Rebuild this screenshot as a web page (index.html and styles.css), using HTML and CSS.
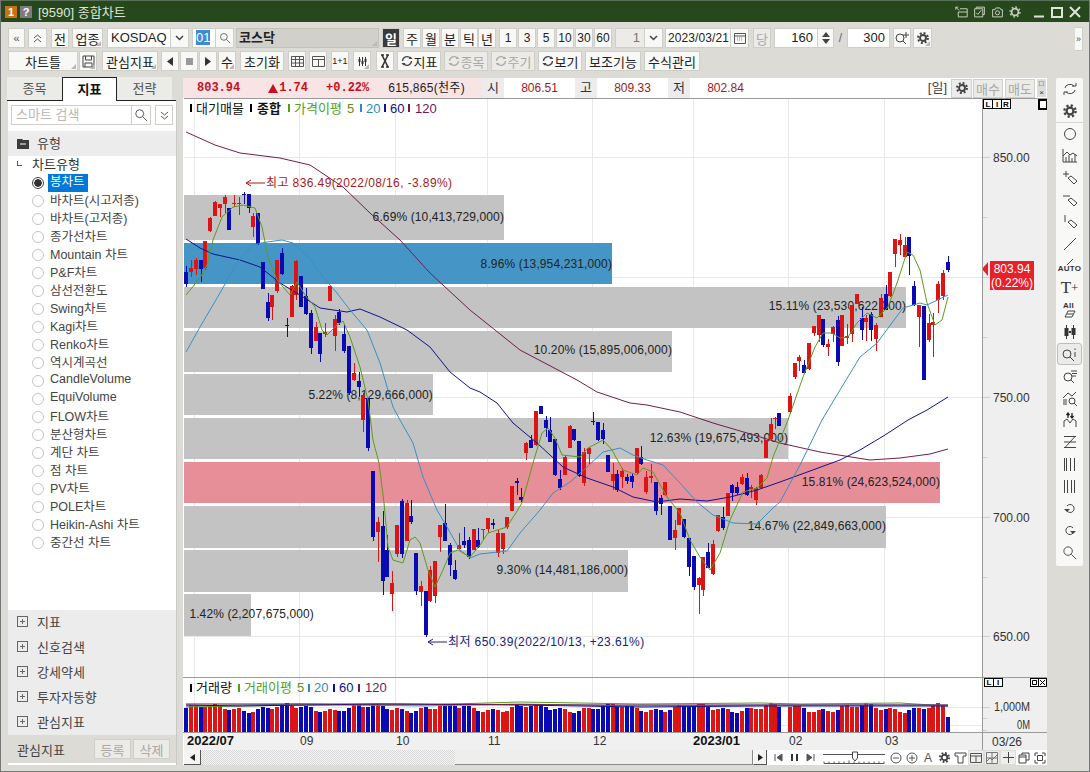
FILE: index.html
```html
<!DOCTYPE html>
<html lang="ko">
<head>
    <meta charset="utf-8">
    <title>[9590] 종합차트</title>
    <link rel="stylesheet" href="styles.css">
</head>
<body>
<svg class="defs" width="0" height="0">
    <symbol id="gear" viewBox="0 0 16 16">
        <circle cx="8" cy="8" r="5.6" fill="none" stroke="#444" stroke-width="2.4" stroke-dasharray="2.2 2.2"/>
        <circle cx="8" cy="8" r="3.4" fill="none" stroke="#444" stroke-width="2.2"/>
    </symbol>
    <symbol id="search" viewBox="0 0 16 16">
        <circle cx="6.5" cy="6.5" r="4.5" fill="none" stroke="#444"/>
        <path d="M10 10l5 5" stroke="#444" fill="none"/>
    </symbol>
    <symbol id="tag" viewBox="0 0 16 16">
        <path d="M6 8l3-2 6 5-3 3z" fill="none" stroke="#444"/>
    </symbol>
    <symbol id="reload" viewBox="0 0 12 12">
        <path d="M1.5 6a4.5 4.5 0 0 1 8-2.6M10.5 6a4.5 4.5 0 0 1-8 2.6" fill="none" stroke="currentColor" stroke-width="1.3"/>
        <path d="M7.5 4h4l-2-2.4zM4.5 8h-4l2 2.4z" fill="currentColor"/>
    </symbol>
</svg>

<header class="titlebar">
    <span class="badge badge-one">1</span>
    <span class="badge badge-help">?</span>
    <span class="title">[9590] 종합차트</span>
    <div class="title-icons">
        <svg width="13" height="12" viewBox="0 0 16 14"><path d="M6 3h9v10H4V7M4 7h11M1 1l4 4M1 1h3M1 1v3" fill="none" stroke="#c8d0c0" stroke-width="1.2"/></svg>
        <svg width="13" height="12" viewBox="0 0 16 14"><path d="M4 3V1h10v9h-2M2 3h10v10H2zM4 8l2 2 4-5" fill="none" stroke="#c8d0c0" stroke-width="1.2"/></svg>
        <svg width="13" height="12" viewBox="0 0 16 14"><path d="M2 4h3l1-2h5l1 2h2v9H2z" fill="none" stroke="#c8d0c0" stroke-width="1.2"/><circle cx="8" cy="8" r="2.5" fill="none" stroke="#c8d0c0" stroke-width="1.2"/></svg>
        <svg width="12" height="12" viewBox="0 0 14 14"><circle cx="7" cy="7" r="4" fill="none" stroke="#c8d0c0" stroke-width="2"/><circle cx="7" cy="7" r="5.8" fill="none" stroke="#c8d0c0" stroke-width="1.6" stroke-dasharray="2 2.5"/></svg>
    </div>
    <div class="win-buttons">
        <svg width="12" height="12" viewBox="0 0 12 12"><path d="M1 10.5h10" stroke="#dfe4da" stroke-width="2"/></svg>
        <svg width="12" height="12" viewBox="0 0 12 12"><rect x="1" y="2" width="10" height="9" fill="none" stroke="#dfe4da" stroke-width="2"/></svg>
        <svg width="12" height="12" viewBox="0 0 12 12"><path d="M1 1l10 10M11 1L1 11" stroke="#dfe4da" stroke-width="2"/></svg>
    </div>
</header>

<div class="toolbar">
    <div class="tool-row">
        <button class="btn w17 small">«</button>
        <button class="btn w19 ml3 small">
            <svg width="9" height="9" viewBox="0 0 9 9"><path d="M1 4l3.5-3L8 4M1 8l3.5-3L8 8" fill="none" stroke="#555"/></svg>
        </button>
        <button class="btn w18 ml4">전</button>
        <button class="btn w31 ml3 corner">업종</button>
        <div class="combo w82 ml4">
            <span class="field">KOSDAQ</span>
            <span class="drop"><svg width="9" height="6" viewBox="0 0 9 6"><path d="M1 1l3.5 3.5L8 1" fill="none" stroke="#444" stroke-width="1.5"/></svg></span>
        </div>
        <div class="combo w42 ml3">
            <span class="field code"><mark>01</mark></span>
            <span class="drop"><svg width="12" height="12"><use href="#search" width="12" height="12"/></svg></span>
        </div>
        <div class="name-box w143 ml2 corner">코스닥</div>
        <button class="btn w18 ml3 active">일</button>
        <button class="btn w18 ml3">주</button>
        <button class="btn w18 ml1">월</button>
        <button class="btn w18 ml1">분</button>
        <button class="btn w18 ml1">틱</button>
        <button class="btn w18">년</button>
        <button class="btn w18 ml3 num">1</button>
        <button class="btn w18 ml1 num">3</button>
        <button class="btn w18 ml1 num">5</button>
        <button class="btn w18 ml1 num">10</button>
        <button class="btn w18 ml1 num">30</button>
        <button class="btn w18 ml1 num">60</button>
        <div class="combo w48 ml3">
            <span class="field grey right">1</span>
            <span class="drop"><svg width="9" height="6" viewBox="0 0 9 6"><path d="M1 1l3.5 3.5L8 1" fill="none" stroke="#444" stroke-width="1.5"/></svg></span>
        </div>
        <div class="combo w84 ml2">
            <span class="field date">2023/03/21</span>
            <span class="drop"><svg width="12" height="11" viewBox="0 0 12 11"><path d="M.5.5h11v10H.5zM.5 3h11" fill="none" stroke="#555"/><path d="M3 5h6M3 7h6" stroke="#888" stroke-dasharray="1 1"/></svg></span>
        </div>
        <button class="btn w18 ml4 off">당</button>
        <div class="combo w60 ml3">
            <span class="field right">160</span>
            <span class="updown">
                <svg width="8" height="5" viewBox="0 0 8 5"><path d="M4 0l4 5H0z" fill="#444"/></svg>
                <svg width="8" height="5" viewBox="0 0 8 5"><path d="M4 5l4-5H0z" fill="#444"/></svg>
            </span>
        </div>
        <span class="slash">/</span>
        <div class="combo w43"><span class="field right">300</span></div>
        <button class="btn w18 ml3"><svg width="16" height="14" viewBox="0 0 16 14"><circle cx="6" cy="7" r="4" fill="none" stroke="#444"/><path d="M9 10l3 3M12 1v6M9 4h6" stroke="#444" fill="none"/></svg></button>
        <button class="btn w19 ml2 corner"><svg width="14" height="14"><use href="#gear" width="14" height="14"/></svg></button>
        <span class="more">»</span>
    </div>
    <div class="tool-row row-two">
        <button class="btn w70 corner">차트틀</button>
        <button class="btn w18 ml1 corner"><svg width="13" height="13" viewBox="0 0 13 13"><path d="M1 1h11v11H1zM3.5 1v4h6V1M3 12V8h7v4" fill="none" stroke="#444"/></svg></button>
        <button class="btn w56 ml5 corner">관심지표</button>
        <button class="btn w18 ml3"><svg width="6" height="9" viewBox="0 0 6 9"><path d="M6 0v9L0 4.5z" fill="#333"/></svg></button>
        <button class="btn w18 ml1"><svg width="7" height="7"><rect width="7" height="7" fill="#999"/></svg></button>
        <button class="btn w18 ml1"><svg width="6" height="9" viewBox="0 0 6 9"><path d="M0 0v9l6-4.5z" fill="#333"/></svg></button>
        <button class="btn w18 ml1 corner">수</button>
        <button class="btn w44 ml4">초기화</button>
        <button class="btn w18 ml4"><svg width="13" height="11" viewBox="0 0 13 11"><path d="M.5.5h12v10H.5zM.5 3.5h12M.5 7h12M4.500 .5v10M8.500 .5v10" fill="none" stroke="#555"/></svg></button>
        <button class="btn w18 ml3"><svg width="13" height="11" viewBox="0 0 13 11"><path d="M.5.5h12v10H.5zM.5 3.500h12M6.500 3.500v7" fill="none" stroke="#555"/></svg></button>
        <button class="btn w18 ml4 tiny">1+1</button>
        <button class="btn w18 ml4 corner"><svg width="11" height="11" viewBox="0 0 11 11"><path d="M2.500 1v9M5.500 1v9M8.500 1v9" stroke="#333"/><path d="M1.500 3h2v3h-2zM4.500 5h2v3h-2zM7.500 3h2v3h-2z" fill="#333"/></svg></button>
        <button class="btn w18 ml5"><svg width="10" height="14" viewBox="0 0 10 14"><path d="M2 1l6 12M8 1L2 13" stroke="#333" stroke-width="1.600"/><path d="M1 1h3M6 1h3M1 13h3M6 13h3" stroke="#333" stroke-width="1.500"/></svg></button>
        <button class="btn w44 ml3"><svg class="reload" width="12" height="12"><use href="#reload"/></svg>지표</button>
        <button class="btn w44 ml3 off"><svg class="reload" width="12" height="12"><use href="#reload"/></svg>종목</button>
        <button class="btn w44 ml3 off"><svg class="reload" width="12" height="12"><use href="#reload"/></svg>주기</button>
        <button class="btn w44 ml3"><svg class="reload" width="12" height="12"><use href="#reload"/></svg>보기</button>
        <button class="btn w56 ml3">보조기능</button>
        <button class="btn w56 ml3">수식관리</button>
    </div>
</div>

<main class="content">
    <aside class="side">
        <div class="tabs">
            <div class="tab">종목</div>
            <div class="tab tab-on">지표</div>
            <div class="tab">전략</div>
        </div>
        <div class="side-body">
            <div class="search-row">
                <span class="search-input">스마트 검색</span>
                <span class="search-btn"><svg width="14" height="14"><use href="#search" width="14" height="14"/></svg></span>
                <span class="search-more"><svg width="9" height="9" viewBox="0 0 9 9"><path d="M1 1l3.500 3L8 1M1 5l3.500 3L8 5" fill="none" stroke="#555"/></svg></span>
            </div>
            <div class="group-head">
                <svg width="12" height="10" viewBox="0 0 12 10"><path d="M0 0h5l1 1h6v9H0z" fill="#3c3c3c"/><path d="M3 5h6" stroke="#fff"/></svg>
                <span>유형</span>
            </div>
            <div class="tree">
                <div class="tree-root"><span class="elbow"></span>차트유형</div>
                <div class="tree-item"><span class="radio radio-on"></span><span class="item-on">봉차트</span></div>
                <div class="tree-item"><span class="radio"></span><span class="item">바차트(시고저종)</span></div>
                <div class="tree-item"><span class="radio"></span><span class="item">바차트(고저종)</span></div>
                <div class="tree-item"><span class="radio"></span><span class="item">종가선차트</span></div>
                <div class="tree-item"><span class="radio"></span><span class="item">Mountain 차트</span></div>
                <div class="tree-item"><span class="radio"></span><span class="item">P&amp;F차트</span></div>
                <div class="tree-item"><span class="radio"></span><span class="item">삼선전환도</span></div>
                <div class="tree-item"><span class="radio"></span><span class="item">Swing차트</span></div>
                <div class="tree-item"><span class="radio"></span><span class="item">Kagi차트</span></div>
                <div class="tree-item"><span class="radio"></span><span class="item">Renko차트</span></div>
                <div class="tree-item"><span class="radio"></span><span class="item">역시계곡선</span></div>
                <div class="tree-item"><span class="radio"></span><span class="item">CandleVolume</span></div>
                <div class="tree-item"><span class="radio"></span><span class="item">EquiVolume</span></div>
                <div class="tree-item"><span class="radio"></span><span class="item">FLOW차트</span></div>
                <div class="tree-item"><span class="radio"></span><span class="item">분산형차트</span></div>
                <div class="tree-item"><span class="radio"></span><span class="item">계단 차트</span></div>
                <div class="tree-item"><span class="radio"></span><span class="item">점 차트</span></div>
                <div class="tree-item"><span class="radio"></span><span class="item">PV차트</span></div>
                <div class="tree-item"><span class="radio"></span><span class="item">POLE차트</span></div>
                <div class="tree-item"><span class="radio"></span><span class="item">Heikin-Ashi 차트</span></div>
                <div class="tree-item"><span class="radio"></span><span class="item">중간선 차트</span></div>
            </div>
            <div class="groups">
                <div class="group-row"><span class="plus"></span>지표</div>
                <div class="group-row"><span class="plus"></span>신호검색</div>
                <div class="group-row"><span class="plus"></span>강세약세</div>
                <div class="group-row"><span class="plus"></span>투자자동향</div>
                <div class="group-row"><span class="plus"></span>관심지표</div>
            </div>
            <div class="side-foot">
                <span class="foot-label">관심지표</span>
                <button class="btn foot-btn off">등록</button>
                <button class="btn foot-btn off">삭제</button>
            </div>
        </div>
    </aside>

    <section class="chart-col">
        <div class="status">
            <div class="status-main">
                <b class="st-price">803.94</b>
                <b class="st-change"><i class="up"></i>1.74</b>
                <b class="st-rate">+0.22%</b>
                <span class="st-vol">615,865(천주)</span>
            </div>
            <span class="st-key">시</span><span class="st-val">806.51</span>
            <span class="st-key">고</span><span class="st-val">809.33</span>
            <span class="st-key">저</span><span class="st-val">802.84</span>
            <div class="status-right">
                <span class="st-period">[일]</span>
                <button class="btn st-gear"><svg width="14" height="14"><use href="#gear" width="14" height="14"/></svg></button>
                <button class="btn st-trade off">매수</button>
                <button class="btn st-trade off">매도</button>
                <div class="st-mini"><span>□</span><span>×</span></div>
            </div>
        </div>

        <svg id="chart" class="chart" width="864" height="652" viewBox="183 98 864 652">
            <rect x="183" y="98" width="864" height="652" fill="#fff"/>
            <rect x="982" y="98" width="65" height="652" fill="#efefef"/>
            <rect x="184" y="733" width="798" height="17" fill="#f0f0f0"/>

            <g class="grid">
                <path d="M184 157H982M184 277H982M184 397H982M184 517H982M184 636H982"/>
                <path d="M194 98V677M299 98V677M395 98V677M487 98V677M592 98V677M693 98V677M788 98V677M884 98V677"/>
                <path d="M194 678V732M299 678V732M395 678V732M487 678V732M592 678V732M693 678V732M788 678V732M884 678V732M184 707H982M184 725H982"/>
                <path class="ticks" d="M982 157h8M982 217h5M982 277h8M982 337h5M982 397h8M982 457h5M982 517h8M982 577h5M982 636h8M982 707h8M982 718h5M982 730h5"/>
            </g>

            <g class="bands">
                <rect x="184" y="195" width="320" height="45"/>
                <rect x="184" y="243" width="428" height="41" class="band-blue"/>
                <rect x="184" y="287" width="722" height="41"/>
                <rect x="184" y="331" width="488" height="41"/>
                <rect x="184" y="374" width="249" height="41"/>
                <rect x="184" y="418" width="604" height="41"/>
                <rect x="184" y="462" width="756" height="41" class="band-pink"/>
                <rect x="184" y="506" width="702" height="42"/>
                <rect x="184" y="550" width="444" height="42"/>
                <rect x="184" y="594" width="67" height="42"/>
            </g>
            <g class="band-text">
                <text x="504" y="221">6.69% (10,413,729,000)</text>
                <text x="612" y="268">8.96% (13,954,231,000)</text>
                <text x="906" y="310">15.11% (23,530,622,000)</text>
                <text x="672" y="354">10.20% (15,895,006,000)</text>
                <text x="433" y="399">5.22% (8,129,666,000)</text>
                <text x="788" y="442">12.63% (19,675,493,000)</text>
                <text x="940" y="486">15.81% (24,623,524,000)</text>
                <text x="886" y="530">14.67% (22,849,663,000)</text>
                <text x="628" y="574">9.30% (14,481,186,000)</text>
                <text x="314" y="618">1.42% (2,207,675,000)</text>
            </g>

            <g id="candles"></g>
            <g id="volume"></g>

            <g class="ma">
                <polyline class="ma120" points="186,132 215,145 240,153 280,158 310,165 343,187 370,213 400,240 430,273 470,310 520,350 577,380 597,392 630,403 647,405 680,412 713,423 747,433 780,443 820,452 870,460 900,458 930,454 948,449"/>
                <polyline class="ma60" points="186,239 200,248 213,254 240,260 260,267 280,283 300,295 320,308 347,312 360,309 380,317 407,330 430,347 450,372 470,388 480,392 497,403 513,423 537,443 563,467 587,478 613,487 633,497 657,502 680,499 707,501 730,497 757,490 780,482 810,471 840,460 860,450 885,435 908,420 927,410 948,397"/>
                <polyline class="ma20" points="186,352 200,327 220,293 237,263 252,245 267,242 282,240 293,243 307,255 323,277 337,293 350,310 367,330 380,363 393,407 400,420 413,443 423,477 437,510 447,527 460,550 470,558 480,554 507,551 520,533 540,510 553,493 570,482 587,467 603,452 620,448 633,455 647,460 663,465 680,483 697,502 713,515 733,523 757,524 773,508 780,502 800,465 822,420 840,390 860,357 877,343 903,308 920,303 927,305 948,295"/>
                <polyline class="ma5" points="186,295 200,278 207,265 213,240 222,217 233,207 243,205 255,208 262,227 268,257 277,280 290,295 297,282 305,295 315,307 322,330 327,335 337,325 343,321 350,337 360,367 368,400 373,440 379,463 384,503 388,547 393,560 403,563 410,540 415,537 420,543 428,570 435,587 443,570 450,553 458,550 470,557 480,545 488,533 507,527 522,503 533,463 542,433 548,428 555,438 562,455 580,457 588,448 603,440 612,450 623,470 637,475 643,468 653,472 667,497 680,513 690,540 700,557 710,570 720,553 730,520 743,492 757,488 767,478 773,457 780,440 788,420 803,377 815,347 823,333 832,333 840,338 848,337 857,323 867,313 877,318 888,307 897,283 907,252 913,255 920,270 927,303 935,325 942,320 948,297"/>
            </g>
            <g class="ma vol-ma">
                <polyline class="ma5" points="186,707 300,705 420,705 520,702 640,704 760,703 800,704 900,703 948,706"/>
                <polyline class="ma20" points="186,706 300,704 420,706 520,704 640,706 760,705 880,705 948,705"/>
                <polyline class="ma60" points="186,705 240,706 380,704 520,705 640,707 760,706 948,706"/>
                <polyline class="ma120" points="186,704 400,704 600,705 800,705 948,705"/>
            </g>

            <g class="note note-high">
                <path d="M246 183h19M246 183l5-3M246 183l5 3" fill="none" stroke="#a51c1c"/>
                <text x="266" y="187">최고 836.49(2022/08/16, -3.89%)</text>
            </g>
            <g class="note note-low">
                <path d="M428 642h19M428 642l5-3M428 642l5 3" fill="none" stroke="#20207a"/>
                <text x="448" y="646">최저 650.39(2022/10/13, +23.61%)</text>
            </g>

            <g class="legend">
                <rect x="190" y="104" width="2" height="8" fill="#000"/>
                <text x="196" y="113">대기매물</text>
                <rect x="250" y="104" width="2" height="8" fill="#000"/>
                <text x="257" y="113" class="leg-bold">종합</text>
                <rect x="288" y="104" width="2" height="8" fill="#4fa01e"/>
                <text x="294" y="113" class="leg-green">가격이평</text>
                <text x="347" y="113" class="leg-olive">5</text>
                <rect x="360" y="104" width="2" height="8" fill="#2d8ac4"/>
                <text x="366" y="113" class="leg-sky">20</text>
                <rect x="384" y="104" width="2" height="8" fill="#10108c"/>
                <text x="390" y="113" class="leg-navy">60</text>
                <rect x="408" y="104" width="2" height="8" fill="#6e1a5a"/>
                <text x="415" y="113" class="leg-plum">120</text>
                <rect x="190" y="684" width="2" height="8" fill="#000"/>
                <text x="196" y="692">거래량</text>
                <rect x="238" y="684" width="2" height="8" fill="#4fa01e"/>
                <text x="244" y="692" class="leg-green">거래이평</text>
                <text x="297" y="692" class="leg-olive">5</text>
                <rect x="308" y="684" width="2" height="8" fill="#2d8ac4"/>
                <text x="314" y="692" class="leg-sky">20</text>
                <rect x="333" y="684" width="2" height="8" fill="#10108c"/>
                <text x="339" y="692" class="leg-navy">60</text>
                <rect x="358" y="684" width="2" height="8" fill="#6e1a5a"/>
                <text x="365" y="692" class="leg-plum">120</text>
            </g>

            <g class="axis-text">
                <text x="993" y="162">850.00</text>
                <text x="993" y="402">750.00</text>
                <text x="993" y="522">700.00</text>
                <text x="993" y="641">650.00</text>
                <text x="994" y="711" textLength="36" lengthAdjust="spacingAndGlyphs">1,000M</text>
                <text x="1017" y="729" textLength="13" lengthAdjust="spacingAndGlyphs">0M</text>
                <text x="992" y="746">03/26</text>
                <text x="300" y="745">09</text>
                <text x="396" y="745">10</text>
                <text x="488" y="745">11</text>
                <text x="593" y="745">12</text>
                <text x="789" y="745">02</text>
                <text x="885" y="745">03</text>
                <text x="187" y="745" class="axis-bold">2022/07</text>
                <text x="693" y="745" class="axis-bold">2023/01</text>
            </g>

            <path d="M988 262v14l-6-7z" fill="#e8202a"/>
            <rect x="990" y="261" width="44" height="29" fill="#e8202a"/>
            <g class="price-tag">
                <text x="1012" y="273">803.94</text>
                <text x="1012" y="287">(0.22%)</text>
            </g>

            <g class="boxes">
                <rect x="983.500" y="99.500" width="9" height="9"/><rect x="992.500" y="99.500" width="9" height="9"/><rect x="1001.500" y="99.500" width="9" height="9"/>
                <rect x="1038.500" y="99.500" width="8" height="9" stroke-width="2"/>
                <rect x="984.500" y="678.500" width="9" height="8"/><rect x="993.500" y="678.500" width="9" height="8"/>
                <rect x="1030.500" y="678.500" width="8" height="8"/><rect x="1038.500" y="678.500" width="8" height="8"/>
                <text x="988" y="107">L</text><text x="997" y="107">I</text><text x="1006" y="107">R</text>
                <text x="989" y="685">L</text><text x="998" y="685">I</text>
                <path d="M1040 680l5 5M1045 680l-5 5M1032.500 680.500h4v4h-4z" fill="none" stroke="#000"/>
            </g>

            <path class="frame" d="M183.500 98.500H1047M982.500 98V750M183 677.500H1047M183 732.500H1047"/>
        </svg>

        <div class="scroll">
            <span class="arrow-btn"><svg width="5" height="7" viewBox="0 0 5 7"><path d="M5 0v7L0 3.500z" fill="#222"/></svg></span>
            <span class="track"></span>
            <span class="thumb"></span>
            <span class="arrow-btn arrow-right"><svg width="5" height="7" viewBox="0 0 5 7"><path d="M0 0v7l5-3.500z" fill="#222"/></svg></span>
            <div class="mini-bar">
                <span class="mini"><svg width="9" height="9" viewBox="0 0 9 9"><path d="M1 1v7M8 1v7L3 4.500z" fill="#555" stroke="#555"/></svg></span>
                <span class="mini"><svg width="9" height="9" viewBox="0 0 9 9"><path d="M1 1h2v7H1zM6 1h2v7H6z" fill="#333"/></svg></span>
                <span class="mini"><svg width="9" height="9" viewBox="0 0 9 9"><path d="M8 1v7M1 1v7l5-3.500z" fill="#555" stroke="#555"/></svg></span>
                <span class="slider"><svg width="62" height="14" viewBox="0 0 62 14"><path d="M0 3.500h62" stroke="#555"/><path d="M1 12.500h60M1 12.500v-2M6 12.500v-2M11 12.500v-2M16 12.500v-2M21 12.500v-2M26 12.500v-3M31 12.500v-2M36 12.500v-2M41 12.500v-2M46 12.500v-2M51 12.500v-2M56 12.500v-2M61 12.500v-2" stroke="#555" fill="none"/><path d="M29.500 1h5v6l-2.500 3-2.500-3z" fill="#fff" stroke="#444"/></svg></span>
                <span class="mini"><svg width="12" height="12" viewBox="0 0 12 12"><circle cx="6" cy="6" r="5" fill="none" stroke="#555"/><path d="M3 6h6" stroke="#555"/></svg></span>
                <span class="mini"><svg width="12" height="12" viewBox="0 0 12 12"><circle cx="6" cy="6" r="5" fill="none" stroke="#555"/><path d="M3 6h6M6 3v6" stroke="#555"/></svg></span>
                <span class="mini mini-a">A</span>
                <span class="mini"><svg width="13" height="13"><use href="#gear" width="13" height="13"/></svg></span>
                <span class="mini"><svg width="13" height="12" viewBox="0 0 13 12"><path d="M1 1h11v3H9v7H4V4H1z" fill="none" stroke="#444"/></svg></span>
                <span class="mini mini-on"><svg width="12" height="10" viewBox="0 0 12 10"><path d="M.5.5h11v9H.5zM.5 3h11M6 3v6.500" fill="none" stroke="#555"/></svg></span>
                <span class="mini mini-on"><svg width="12" height="12" viewBox="0 0 12 12"><path d="M.5.5h11v11H.5zM1 9l3-3 2 2 5-5M.5 6h11M6 .5v11" fill="none" stroke="#777"/></svg></span>
                <span class="mini mini-on"><svg width="11" height="11" viewBox="0 0 11 11"><path d="M5.500 0v11M0 5.500h11" stroke="#444"/></svg></span>
                <span class="mini"><svg width="12" height="12" viewBox="0 0 12 12"><path d="M4 3V1h7v7H8M1 3h7v8H1zM1 5h7" fill="none" stroke="#444"/></svg></span>
                <span class="mini"><svg width="12" height="12" viewBox="0 0 12 12"><path d="M1 4V1h3M8 1h3v3M11 8v3H8M4 11H1V8M3.500 3.500h5v5h-5z" fill="none" stroke="#444"/></svg></span>
            </div>
        </div>
    </section>

    <nav class="strip">
        <span class="st"><svg width="16" height="16" viewBox="0 0 16 16"><path d="M3 7a5 4 0 0 1 9-2M13 9a5 4 0 0 1-9 2M10 5h4V2M6 11H2v3" fill="none" stroke="#444"/></svg></span>
        <span class="st"><svg width="16" height="16"><use href="#gear" width="16" height="16"/></svg></span>
        <span class="strip-sep"></span>
        <span class="st"><svg width="14" height="14" viewBox="0 0 14 14"><circle cx="7" cy="7" r="5.500" fill="none" stroke="#444"/></svg></span>
        <span class="st"><svg width="16" height="14" viewBox="0 0 16 14"><path d="M1 0v13h14M4 13V8M7 13V6M10 13V9M13 13V5M1 7l4-4 3 3 3-2 4 3" fill="none" stroke="#444"/></svg></span>
        <span class="st"><svg width="16" height="16" viewBox="0 0 16 16"><use href="#tag"/><path d="M1 4h6M4 1v6" stroke="#444"/></svg></span>
        <span class="st"><svg width="16" height="16" viewBox="0 0 16 16"><use href="#tag"/><path d="M1 4h7" stroke="#444"/></svg></span>
        <span class="st"><svg width="16" height="16" viewBox="0 0 16 16"><use href="#tag"/><path d="M3 1v7" stroke="#444"/></svg></span>
        <span class="st"><svg width="14" height="14" viewBox="0 0 14 14"><path d="M1 13L13 1" stroke="#444"/></svg></span>
        <span class="st st-auto"><svg width="12" height="6" viewBox="0 0 12 6"><path d="M3 6l6-6" stroke="#444"/></svg><em>AUTO</em></span>
        <span class="st st-text">T<sup>+</sup></span>
        <span class="st st-all"><em>All</em><svg width="12" height="8" viewBox="0 0 12 8"><path d="M1 7l3-6h7L8 7zM3 4h6" fill="none" stroke="#444"/></svg></span>
        <span class="st"><svg width="14" height="14" viewBox="0 0 14 14"><path d="M3.500 0v14M10.500 0v14" stroke="#333"/><rect x="1.500" y="3" width="4" height="8" fill="#333"/><rect x="8.500" y="3" width="4" height="7" fill="#333"/><rect x="6" y="6" width="2" height="2" fill="#333"/></svg></span>
        <span class="st st-on"><svg width="17" height="15" viewBox="0 0 17 15"><circle cx="6" cy="7" r="4" fill="none" stroke="#444"/><path d="M9 10l4 4M14 5v5M14 1.500v1.500" stroke="#444"/></svg></span>
        <span class="st"><svg width="16" height="14" viewBox="0 0 16 14"><circle cx="6" cy="8" r="4" fill="none" stroke="#444"/><path d="M9 11l3 3M9 2h6M10 4.500h5M10 7h4" stroke="#444"/></svg></span>
        <span class="st"><svg width="16" height="15" viewBox="0 0 16 15"><path d="M1 7l5-5 4 3 4-4M1 9h4M1 11h4M1 13h4" fill="none" stroke="#444"/><circle cx="10" cy="10" r="3" fill="none" stroke="#444"/><path d="M12 12l3 3" stroke="#444"/></svg></span>
        <span class="st"><svg width="14" height="16" viewBox="0 0 14 16"><path d="M1 15V9l3-2 3 4 3-4 3 2v6" fill="none" stroke="#444"/><path d="M5 1v5M3.500 3L5 1l1.500 2M9 1v5M7.500 4L9 6l1.500-2" fill="none" stroke="#222" stroke-width="1.300"/></svg></span>
        <span class="st"><svg width="14" height="14" viewBox="0 0 14 14"><path d="M1 1.500h12M1 7h12M1 12.500h12M12 1.500L2 12.500" fill="none" stroke="#444"/></svg></span>
        <span class="st"><svg width="13" height="13" viewBox="0 0 13 13"><path d="M1.500 0v13M3.500 0v13M7.500 0v13M11.500 0v13" stroke="#444"/></svg></span>
        <span class="st"><svg width="13" height="13" viewBox="0 0 13 13"><path d="M1.500 0v13M4.500 0v13M8.500 0v13M11.500 0v13" stroke="#444"/></svg></span>
        <span class="st"><svg width="14" height="14" viewBox="0 0 14 14"><path d="M4 5a4 4 0 1 1 0 5" fill="none" stroke="#444"/><path d="M1 8h6l-3 3z" fill="#444"/></svg></span>
        <span class="st"><svg width="14" height="14" viewBox="0 0 14 14"><path d="M10 5a4 4 0 1 0 0 5" fill="none" stroke="#444"/><path d="M13 8H7l3 3z" fill="#444"/></svg></span>
        <span class="st"><svg width="15" height="15"><use href="#search" width="15" height="15"/></svg></span>
    </nav>
</main>

<script src="chart.js"></script>
</body>
</html>
```
FILE: styles.css
```css
* { box-sizing: border-box; }
html, body { margin: 0; padding: 0; }
body {
    width: 1090px;
    height: 772px;
    overflow: hidden;
    background: #dcdbd5;
    border-left: 1px solid #777;
    border-right: 1px solid #777;
    border-bottom: 1px solid #777;
    font-family: "Liberation Sans", "Noto Sans CJK KR", sans-serif;
    font-size: 12px;
    color: #333;
}
.defs { position: absolute; }
button { font-family: inherit; }

/* title bar */
.titlebar { height: 22px; display: flex; align-items: center; background: #27481c; border-top: 1px solid #59705a; padding-left: 4px; color: #dfe4da; }
.badge { width: 12px; height: 12px; font-size: 11px; font-weight: bold; line-height: 12px; text-align: center; color: #fff; }
.badge-one { background: #c9720f; }
.badge-help { background: #7d7d7d; margin-left: 3px; }
.title { margin-left: 6px; font-size: 13px; }
.title-icons { margin-left: auto; display: flex; gap: 5px; align-items: center; }
.win-buttons { display: flex; gap: 6px; margin-left: 12px; margin-right: 8px; }

/* toolbars */
.toolbar { padding: 6px 0 0 7px; height: 55px; }
.tool-row { display: flex; height: 20px; align-items: stretch; }
.row-two { margin-top: 3px; }
.btn { position: relative; padding: 0; height: 20px; display: flex; align-items: center; justify-content: center; background: #f8f8f6; border: 1px solid #cfcfca; color: #222; font-size: 13px; white-space: nowrap; }
.btn.small { color: #555; font-size: 11px; }
.btn.num { font-size: 12px; }
.btn.tiny { font-size: 9px; }
.btn.off { color: #a8a8a8; background: #ecebe7; }
.btn.active { background: #3a3a3a; color: #fff; font-weight: bold; }
.corner::after { content: ""; position: absolute; right: 1px; bottom: 1px; border-style: solid; border-width: 0 0 5px 5px; border-color: transparent transparent #b9b9b4 transparent; }
.reload { margin-right: 1px; flex: none; color: #444; }
.btn.off .reload { color: #aaa; }

.w17 { width: 17px; } .w18 { width: 18px; } .w19 { width: 19px; } .w31 { width: 31px; }
.w42 { width: 42px; } .w43 { width: 43px; } .w44 { width: 44px; } .w48 { width: 48px; }
.w56 { width: 56px; } .w60 { width: 60px; } .w70 { width: 70px; } .w82 { width: 82px; }
.w84 { width: 84px; } .w143 { width: 143px; }
.ml1 { margin-left: 1px; } .ml2 { margin-left: 2px; } .ml3 { margin-left: 3px; }
.ml4 { margin-left: 4px; } .ml5 { margin-left: 5px; }

.combo { display: flex; height: 20px; background: #fff; border: 1px solid #cfcfca; }
.field { flex: 1; padding-left: 3px; line-height: 18px; font-size: 13px; color: #222; min-width: 0; }
.field.right { text-align: right; padding-right: 4px; font-size: 13px; }
.field.grey { background: #ecebe7; color: #777; }
.field.date { font-size: 12px; padding-left: 2px; letter-spacing: .1px; }
.field.code { padding-left: 3px; }
.field mark { background: #3d8bd4; color: #fff; }
.drop { width: 18px; display: flex; align-items: center; justify-content: center; border-left: 1px solid #cfcfca; background: #f8f8f6; }
.updown { width: 16px; display: flex; flex-direction: column; align-items: center; justify-content: space-around; padding: 2px 0; border-left: 1px solid #cfcfca; background: #f8f8f6; }
.name-box { position: relative; height: 20px; padding-left: 2px; background: #d1d0cb; border: 1px solid #c2c1bc; font-size: 13px; font-weight: bold; line-height: 17px; color: #222; }
.slash { width: 13px; text-align: center; line-height: 20px; color: #666; }
.more { margin-left: auto; margin-right: 6px; width: 8px; height: 24px; margin-top: -1px; background: #f8f8f6; border: 1px solid #cfcfca; border-left: 0; font-size: 9px; line-height: 22px; color: #444; text-align: center; }

/* main area */
.content { display: flex; align-items: flex-start; padding-left: 6px; }

/* left panel */
.side { width: 170px; height: 688px; margin-top: 0; }
.tabs { display: flex; height: 24px; border-bottom: 1px solid #222; margin-right: 1px; }
.tab { width: 55px; text-align: center; line-height: 23px; font-size: 13px; color: #555; background: #ebebe8; }
.tab-on { height: 24px; background: #fff; border: 1px solid #222; border-bottom: 0; color: #111; font-weight: bold; }
.side-body { display: flex; flex-direction: column; height: 664px; margin-left: 1px; background: #fff; border-right: 1px solid #c8c8c4; }
.search-row { height: 30px; display: flex; align-items: flex-start; padding: 4px 0 0 3px; flex: none; }
.search-input { width: 121px; height: 20px; line-height: 18px; padding-left: 4px; border: 1px solid #cfcfca; font-size: 13px; color: #b8b8b8; }
.search-btn { width: 19px; height: 20px; display: flex; align-items: center; justify-content: center; border: 1px solid #cfcfca; border-left: 0; }
.search-more { width: 18px; height: 20px; margin-left: 4px; display: flex; align-items: center; justify-content: center; border: 1px solid #cfcfca; }
.group-head { height: 25px; flex: none; display: flex; align-items: center; padding-left: 9px; background: #ececec; font-size: 13px; color: #444; }
.group-head span { margin-left: 8px; margin-top: -2px; }
.tree { flex: 1; }
.tree-root { height: 18px; padding-bottom: 3px; display: flex; align-items: center; padding-left: 9px; color: #333; font-size: 13px; }
.elbow { width: 5px; height: 5px; margin-right: 10px; border-left: 1px solid #555; border-bottom: 1px solid #555; }
.tree-item { height: 18px; display: flex; align-items: center; padding-left: 24px; color: #444; font-size: 12.500px; }
.radio { width: 12px; height: 12px; margin-right: 6px; border: 1px solid #c4c4c4; border-radius: 50%; background: #fff; flex: none; }
.radio-on { border: 1px solid #444; background: radial-gradient(circle, #333 0 3.500px, #fff 4px); }
.item { margin-top: -4px; }
.item-on { height: 18px; width: 40px; margin-left: -2px; padding-left: 2px; line-height: 17px; background: #0078d7; color: #fff; }
.groups { flex: none; height: 125px; background: #ececec; }
.group-row { height: 25px; padding-bottom: 2px; display: flex; align-items: center; padding-left: 9px; font-size: 13px; color: #444; }
.plus { position: relative; width: 11px; height: 11px; margin-right: 9px; border: 1px solid #666; background: linear-gradient(#666, #666) center / 5px 1px no-repeat, linear-gradient(#666, #666) center / 1px 5px no-repeat; }
.side-foot { flex: none; height: 28px; margin-bottom: 2px; display: flex; align-items: center; padding-left: 9px; background: #dcdbd5; font-size: 13px; color: #444; }
.foot-label { width: 77px; }
.foot-btn { width: 37px; height: 20px; margin-right: 2px; }

/* chart column */
.chart-col { width: 864px; margin-left: 6px; margin-top: 1px; }
.status { height: 20px; display: flex; align-items: stretch; background: #fff; line-height: 20px; }
.status-main { width: 299px; display: flex; align-items: center; background: #f8e4e4; font-family: "Liberation Mono", "Noto Sans CJK KR", monospace; padding-left: 14px; }
.status-main b { color: #c4111c; }
.st-change { margin-left: 28px; display: flex; align-items: center; }
.up { width: 0; height: 0; margin-right: 1px; border-style: solid; border-width: 0 5px 9px 5px; border-color: transparent transparent #c4111c transparent; }
.st-rate { margin-left: 18px; }
.st-vol { margin-left: 19px; letter-spacing: .3px; font-family: "Liberation Sans", "Noto Sans CJK KR", sans-serif; color: #222; }
.st-key { width: 22px; text-align: center; background: #ececec; font-size: 13px; }
.st-val { width: 71px; text-align: center; color: #9c1a24; }
.status-right { margin-left: auto; display: flex; align-items: center; }
.st-period { margin-right: 4px; font-size: 13px; color: #444; }
.st-gear { width: 21px; height: 19px; background: #ececec; }
.st-trade { width: 30px; height: 19px; margin-left: 1px; }
.st-trade + .st-trade { margin-left: 2px; }
.st-mini { width: 9px; margin: 0 1px 0 2px; display: flex; flex-direction: column; font-size: 8px; line-height: 9px; color: #333; text-align: center; background: #ddd; }

.chart { display: block; }
.grid path { fill: none; stroke: #e8e8e8; shape-rendering: crispEdges; }
.grid .ticks { stroke: #cfcfcf; }
.bands rect { fill: #c3c3c3; }
.bands .band-blue { fill: #4596c6; }
.bands .band-pink { fill: #e68f99; }
.band-text text { text-anchor: end; font-size: 12px; letter-spacing: .12px; fill: #222; }
.ma polyline { fill: none; stroke-width: 1; }
.ma5 { stroke: #5f9a1c; }
.ma20 { stroke: #3a8fc4; }
.ma60 { stroke: #10138e; }
.ma120 { stroke: #701e4c; }
.note text { font-size: 12px; letter-spacing: .4px; }
.note-high text { fill: #a51c1c; }
.note-low text { fill: #20207a; }
.legend text { font-size: 13px; fill: #111; }
.legend .leg-bold { font-weight: bold; }
.legend .leg-green { fill: #4fa01e; }
.legend .leg-olive { fill: #6a8a20; }
.legend .leg-sky { fill: #2d8ac4; }
.legend .leg-navy { fill: #10108c; }
.legend .leg-plum { fill: #6e1a5a; }
.axis-text text { font-size: 12px; fill: #333; }
.axis-text .axis-bold { font-size: 13px; font-weight: bold; fill: #111; }
.price-tag text { font-size: 12px; fill: #fff; text-anchor: middle; }
.boxes rect { fill: #fff; stroke: #000; shape-rendering: crispEdges; }
.boxes text { font-size: 8px; font-weight: bold; fill: #000; text-anchor: middle; }
.frame { fill: none; stroke: #9a9a9a; shape-rendering: crispEdges; }

/* scrollbar and mini toolbar under the chart */
.scroll { height: 15px; display: flex; align-items: stretch; background: #fff; }
.arrow-btn { width: 17px; margin-left: 1px; flex: none; display: flex; align-items: center; justify-content: center; background: #f4f4f2; border-right: 1px solid #555; border-bottom: 1px solid #555; }
.arrow-right { width: 14px; margin-left: 0; border-left: 1px solid #fff; }
.track { width: 254px; flex: none; background: repeating-conic-gradient(#d8d8d8 0 25%, #f4f4f4 0 50%) 0 0 / 2px 2px; }
.thumb { width: 298px; flex: none; background: #eeeeec; border-right: 1px solid #888; border-bottom: 1px solid #888; }
.mini-bar { flex: 1; min-width: 0; display: flex; align-items: center; padding-left: 3px; }
.mini { width: 16px; height: 15px; flex: none; display: flex; align-items: center; justify-content: center; }
.mini-a { font-size: 12px; color: #555; }
.mini-on { background: #eeeeec; border: 1px solid #dcdcd8; }
.slider { width: 62px; margin: 0 3px 0 5px; flex: none; display: flex; }

/* right icon strip */
.strip { width: 27px; height: 488px; margin-left: 9px; margin-top: 1px; padding-bottom: 3px; display: flex; flex-direction: column; background: #f8f8f7; border-radius: 2px; }
.st { height: 22px; flex: none; display: flex; align-items: center; justify-content: center; color: #333; }
.strip-sep { height: 1px; flex: none; background: #d4d4d0; }
.st-on { margin: 0 1px; background: #ebebea; border: 1px solid #bdbdbd; border-radius: 3px; }
.st-auto, .st-all { flex-direction: column; }
.st-auto em, .st-all em { font-style: normal; font-size: 8px; line-height: 8px; font-weight: bold; letter-spacing: .3px; }
.st-all em { align-self: flex-start; margin-left: 7px; }
.st-text { font-family: "Liberation Serif", serif; font-size: 17px; }
.st-text sup { font-size: 13px; line-height: 6px; }
```
FILE: chart.js
```js
// candles: [x, bodyTop, bodyBottom, wickTop, wickBottom, up]
// each block was read off the picture at 3x, so it keeps its own origin
var blocks = [
    { ox: 180, oy: 180, rows: [
        [18,275,310,258,322,0],[32,265,278,240,290,1],[47,240,268,235,285,1],[62,240,268,240,305,0],
        [76,183,265,183,270,1],[90,113,152,110,155,1],[104,66,107,62,108,1],[119,72,85,72,110,1],
        [134,52,72,45,100,1],[148,85,152,85,152,0],[162,68,72,45,80,1],[177,68,72,52,105,1],
        [192,42,45,35,70,0],[206,42,85,42,100,0],[220,107,140,100,172,1],[234,100,192,100,195,0],
        [249,245,327,245,327,0],[263,366,415,340,425,0],[277,345,380,345,420,1],[291,240,333,240,338,1],
        [306,218,280,205,285,0],[321,435,438,415,472,0],[335,317,410,315,410,1],[349,243,345,240,360,1],
        [363,288,380,288,382,0],[378,347,400,325,405,0],[393,400,505,390,522,0],[407,442,483,425,483,1],
        [421,460,522,460,548,0],[435,456,462,428,470,1],[450,318,362,318,362,1],[465,418,470,405,512,1],
        [478,395,428,388,435,0],[492,462,512,436,520,0],[507,498,640,498,645,0],[522,580,600,550,605,1],
        [537,603,620,575,650,0],[550,645,720,640,756,1],[564,655,805,655,813,0]
    ]},
    { ox: 180, oy: 420, rows: [
        [579,153,350,153,362,0],[594,306,335,292,428,1],[608,318,482,272,523,0],[622,390,472,345,472,0],
        [636,490,523,452,572,1],[651,316,402,316,412,1],[665,242,402,238,415,0],[680,249,362,240,362,1],
        [694,288,306,240,312,0],[708,400,515,400,527,0],[722,498,515,482,556,1],[737,513,645,513,652,0],
        [751,450,543,438,545,1],[765,422,527,422,548,1],[780,315,350,315,395,1],[795,310,363,253,365,0],
        [810,376,436,368,468,0],[824,450,478,420,480,0],[838,376,388,340,392,1],[852,362,374,322,385,0],
        [867,360,412,350,415,0],[881,328,392,328,392,1],[895,360,380,325,385,0]
    ]},
    { ox: 480, oy: 380, rows: [
        [9,448,452,448,482,1],[24,414,448,414,460,1],[39,430,436,418,448,0],[54,458,518,450,532,1],
        [68,458,505,458,522,1],[81,412,443,410,445,1],[96,318,392,318,392,1],[110,303,310,293,345,0],
        [124,350,360,325,368,0],[138,188,218,185,240,1],[153,180,203,165,205,0],[168,92,195,92,197,1],
        [182,78,103,78,103,0],[197,120,145,108,170,0],[210,150,185,112,188,0],[225,176,283,176,288,0],
        [240,297,325,270,330,0],[255,230,283,225,285,1],[269,138,203,135,205,1],[282,146,178,146,182,0],
        [297,183,288,183,292,0],[312,215,308,205,320,1],[326,205,222,200,250,1],[340,122,125,95,135,0],
        [354,125,180,125,182,0],[369,150,178,128,192,0],[384,225,275,225,275,0],[398,282,302,250,330,1],
        [411,282,330,270,335,0],[426,272,290,265,325,1],[441,292,305,282,312,0],[456,287,305,280,325,0],
        [470,205,280,205,282,1],[484,232,252,197,253,0],[498,290,336,272,340,1],[513,288,293,253,310,1],
        [528,305,392,305,405,0],[542,355,373,345,405,0],[555,305,345,305,348,1],[570,378,480,378,480,0],
        [584,450,475,420,510,1],[598,385,435,385,435,1],[612,418,472,418,475,0],[627,475,563,475,590,0],
        [642,528,620,528,630,0],[657,595,615,590,702,1],[670,532,630,532,650,1],[684,515,562,490,565,0],
        [699,492,582,480,585,1],[714,405,453,405,455,1],[729,412,445,382,452,0],[743,340,408,340,408,1],
        [757,315,340,312,362,0],[771,320,338,305,345,0],[786,292,312,283,315,1],[800,295,345,280,350,0],
        [814,322,328,315,355,1],[828,325,360,320,375,1],[843,285,325,283,328,1],[858,180,233,180,233,1],
        [872,132,178,115,180,1],[886,115,118,110,145,1],[898,100,138,100,140,0]
    ]},
    { ox: 760, oy: 220, rows: [
        [90,528,575,518,580,1],[104,428,470,428,475,1],[118,412,425,405,452,1],[132,435,458,420,460,0],
        [147,368,445,368,448,1],[162,318,340,318,348,1],[176,285,345,285,365,1],[190,297,375,297,380,0],
        [205,372,380,358,410,1],[219,320,340,318,365,1],[233,300,425,287,438,0],[247,285,378,285,378,1],
        [262,348,355,312,372,1],[276,254,340,254,365,1],[291,222,252,222,252,1],[305,295,332,262,362,0],
        [318,293,305,285,362,1],[333,283,330,275,362,0],[348,315,358,310,395,1],[363,235,292,222,292,1],
        [377,222,270,195,270,0],[390,156,228,156,230,1],[405,57,102,57,142,1],[420,60,75,42,105,1],
        [434,75,110,52,112,1],[447,52,110,52,167,0],[462,198,255,182,258,0],[477,255,290,255,382,1],
        [492,258,480,258,480,0],[506,310,360,282,365,1],[520,305,315,280,412,1],[534,192,240,182,278,1],
        [549,160,228,150,240,1],[564,127,150,108,155,0]
    ]}
];

var RED = '#dc1414', BLUE = '#0a0ab4';
var NS = 'http://www.w3.org/2000/svg';

function rect(parent, x, y, w, h, fill) {
    var r = document.createElementNS(NS, 'rect');
    r.setAttribute('x', x);
    r.setAttribute('y', y);
    r.setAttribute('width', w);
    r.setAttribute('height', Math.max(h, 1));
    r.setAttribute('fill', fill);
    r.setAttribute('shape-rendering', 'crispEdges');
    parent.appendChild(r);
}

var candles = document.getElementById('candles');
var volume = document.getElementById('volume');
var n = 0;

blocks.forEach(function(block) {
    block.rows.forEach(function(c) {
        var x = Math.round(block.ox + c[0] / 3);
        var color = c[5] ? RED : BLUE;
        var top = block.oy + c[1] / 3, bottom = block.oy + c[2] / 3;
        var high = block.oy + c[3] / 3, low = block.oy + c[4] / 3;
        rect(candles, x, Math.round(high), 1, Math.round(low - high), color);
        rect(candles, x - 2, Math.round(top), 4, Math.round(bottom - top), color);

        // volume bar, height only roughly follows the picture
        var h = 24 + 3 * Math.sin(n * 0.37) + 2 * Math.sin(n * 1.3);
        if (n === 158) h = 15;
        rect(volume, x - 2, Math.round(732 - h), 4, Math.round(h), color);
        n++;
    });
});
```
